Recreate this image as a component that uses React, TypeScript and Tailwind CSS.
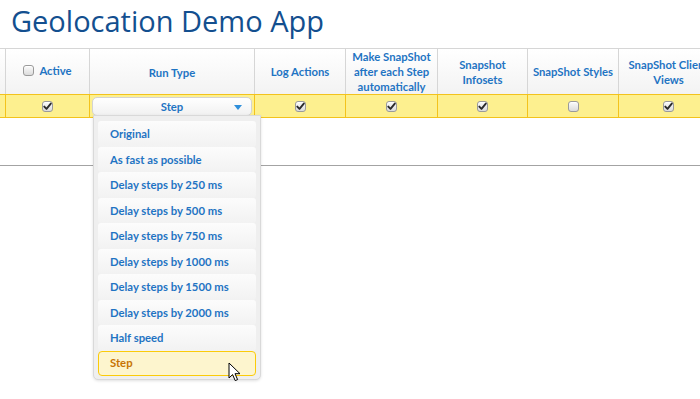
import React from "react";

function Box({ checked }: { checked?: boolean }) {
  return (
    <span className="inline-flex h-[11px] w-[11px] items-center justify-center rounded-[3px] border border-[#9a9a9a] bg-gradient-to-b from-[#fbfbfb] to-[#dcdcdc] shadow-[inset_0_1px_0_#fff]">
      {checked && (
        <svg width="9" height="9" viewBox="0 0 9 9">
          <path d="M1.3 4.6 L3.5 6.9 L7.8 1.6" fill="none" stroke="#2b2b2b" strokeWidth="1.9" strokeLinecap="round" strokeLinejoin="round" />
        </svg>
      )}
    </span>
  );
}

const items = [
  "Original",
  "As fast as possible",
  "Delay steps by 250 ms",
  "Delay steps by 500 ms",
  "Delay steps by 750 ms",
  "Delay steps by 1000 ms",
  "Delay steps by 1500 ms",
  "Delay steps by 2000 ms",
  "Half speed",
];

const small = "font-['Lato',sans-serif] font-bold text-[11.3px] text-[#1f74c3] leading-[15px]";
const hcell = "flex items-center justify-center border-r border-[#d6d6d6] text-center";
const dcell = "flex items-center justify-center border-r border-[#f3c31c]";

export default function App() {
  return (
    <div className="relative h-[399px] w-[700px] overflow-hidden bg-white">
      <div className="pl-[11px] pt-[1px] font-['Open_Sans',sans-serif] text-[29px] leading-[40px] text-[#134f8f]">
        Geolocation Demo App
      </div>
      <div className="mt-[7px] w-[809px]">
        <div className="grid h-[46px] grid-cols-[6px_84px_165px_91px_92px_90px_91px_100px] border-t border-[#d6d6d6] bg-gradient-to-b from-white to-[#f3f3f3]">
          <div className="border-r border-[#d6d6d6]" />
          <div className={`${hcell} gap-[5px] pb-[2px] ${small}`}>
            <Box />
            <span>Active</span>
          </div>
          <div className={`${hcell} pt-[2px] ${small}`}>Run Type</div>
          <div className={`${hcell} ${small}`}>Log Actions</div>
          <div className={`${hcell} ${small}`}>
            Make SnapShot<br />after each Step<br />automatically
          </div>
          <div className={`${hcell} ${small}`}>
            Snapshot<br />Infosets
          </div>
          <div className={`${hcell} ${small}`}>SnapShot Styles</div>
          <div className={`${hcell} ${small}`}>
            SnapShot Client<br />Views
          </div>
        </div>
        <div className="grid h-[24px] grid-cols-[6px_84px_165px_91px_92px_90px_91px_100px] border-y border-[#f3c31c] bg-[#fdf08f]">
          <div className="border-r border-[#f3c31c]" />
          <div className={dcell}><Box checked /></div>
          <div className="flex items-center border-r border-[#f3c31c] px-[2px]">
            <div className={`relative flex h-[19px] w-[160px] items-center justify-center rounded-[5px] border border-[#d3d3d3] bg-gradient-to-b from-white to-[#f1f1f1] ${small}`}>
              Step
              <svg className="absolute right-[9px] top-[7px]" width="8" height="5" viewBox="0 0 8 5">
                <path d="M0 0 H8 L4 5 Z" fill="#2e8fdb" />
              </svg>
            </div>
          </div>
          <div className={dcell}><Box checked /></div>
          <div className={dcell}><Box checked /></div>
          <div className={dcell}><Box checked /></div>
          <div className={dcell}><Box /></div>
          <div className={dcell}><Box checked /></div>
        </div>
      </div>
      <div className="mt-[47px] h-px w-full bg-[#a3a3a3]" />

      <div className="absolute left-[93px] top-[115px] w-[168px] rounded-b-[5px] border border-[#d9d9d9] bg-[#efefef] px-[4px] pb-[3px] pt-[5px] shadow-[0_1px_3px_rgba(0,0,0,0.12)]">
        {items.map((t) => (
          <div key={t} className={`flex h-[25.5px] items-center rounded-[3px] bg-gradient-to-b from-[#fcfcfc] to-[#f2f2f2] pl-[12px] ${small}`}>
            {t}
          </div>
        ))}
        <div className="flex h-[25px] items-center rounded-[4px] border border-[#fbcb09] bg-[#fdf5ce] pl-[11px] font-['Lato',sans-serif] text-[11.3px] font-bold text-[#c77405]">
          Step
        </div>
      </div>

      <svg className="absolute left-[228px] top-[362px]" width="14" height="21" viewBox="0 0 14 21">
        <path d="M1 1 L1 16 L4.6 12.6 L7.2 18.6 L9.6 17.6 L7 11.7 L12 11.7 Z" fill="#fff" stroke="#000" strokeWidth="1" strokeLinejoin="round" />
      </svg>
    </div>
  );
}
